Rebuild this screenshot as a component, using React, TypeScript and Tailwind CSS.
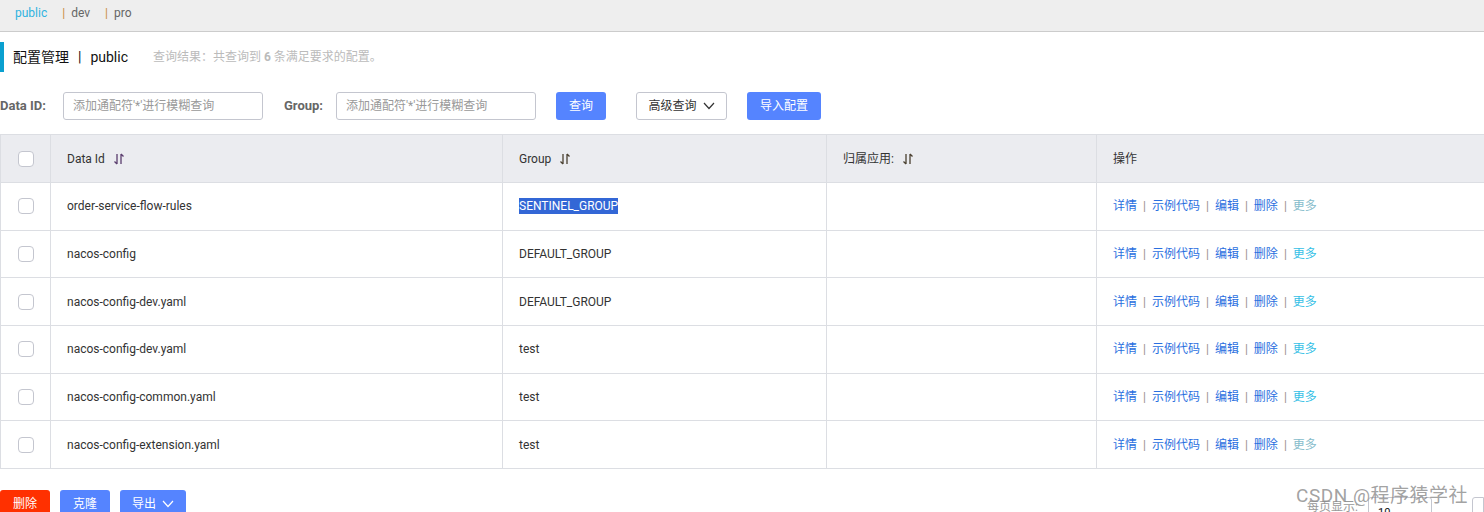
import React from 'react'

const FONT = { fontFamily: 'Roboto, "Noto Sans", "Noto Sans CJK SC", sans-serif' }

type Row = { dataId: string; group: string; selected?: boolean; moreMuted?: boolean }

const ROWS: Row[] = [
  { dataId: 'order-service-flow-rules', group: 'SENTINEL_GROUP', selected: true, moreMuted: true },
  { dataId: 'nacos-config', group: 'DEFAULT_GROUP' },
  { dataId: 'nacos-config-dev.yaml', group: 'DEFAULT_GROUP' },
  { dataId: 'nacos-config-dev.yaml', group: 'test' },
  { dataId: 'nacos-config-common.yaml', group: 'test' },
  { dataId: 'nacos-config-extension.yaml', group: 'test', moreMuted: true },
]

function SortIcon({ color = '#5a3d6e' }: { color?: string }) {
  return (
    <svg width="12" height="14" viewBox="0 0 12 14" className="ml-2 inline-block">
      <path d="M4 2 V12 M1.5 9.5 L4 12" stroke={color} strokeWidth="1.3" fill="none" />
      <path d="M8 12 V2 M8 2 L10.5 4.5" stroke={color} strokeWidth="1.3" fill="none" />
    </svg>
  )
}

function Chevron({ color = '#333' }: { color?: string }) {
  return (
    <svg width="12" height="8" viewBox="0 0 12 8" className="ml-1.5 inline-block">
      <polyline points="1,1 6,6.5 11,1" stroke={color} strokeWidth="1.2" fill="none" />
    </svg>
  )
}

function Checkbox() {
  return <div className="w-4 h-4 rounded-[4px] border border-[#c4c6cf] bg-white" />
}

function Sep() {
  return <span className="mx-[6px] text-[#9a8f8f]">|</span>
}

export default function App() {
  return (
    <div className="w-[1484px] h-[512px] overflow-hidden bg-white text-[12px] text-[#333]" style={FONT}>
      {/* namespace bar */}
      <div className="h-[32px] bg-[#eeeeee] border-b border-[#cccccc] flex items-center pl-[15px] pb-[5px]">
        <span className="text-[#2fb3e0]">public</span>
        <span className="ml-[15px] text-[#c98d3b]">|</span>
        <span className="ml-[6px] text-[#666]">dev</span>
        <span className="ml-[15px] text-[#c98d3b]">|</span>
        <span className="ml-[6px] text-[#666]">pro</span>
      </div>

      {/* title */}
      <div className="mt-[10px] h-[30px] border-l-[4px] border-[#0aa0d0] flex items-center pl-[9px]">
        <span className="text-[14px] text-[#111]">配置管理</span>
        <span className="text-[14px] text-[#111] mx-[9px]">|</span>
        <span className="text-[14px] text-[#111]">public</span>
        <span className="ml-[25px] text-[#bbbbbb]">
          查询结果：共查询到 <b className="font-bold">6</b> 条满足要求的配置。
        </span>
      </div>

      {/* search row */}
      <div className="mt-[20px] h-[28px] flex items-center">
        <span className="font-bold text-[#666] text-[13px] w-[63px]">Data ID:</span>
        <div className="w-[200px] h-[28px] border border-[#c4c6cf] rounded-[3px] flex items-center pl-[9px] text-[#999]">
          添加通配符'*'进行模糊查询
        </div>
        <span className="ml-[21px] font-bold text-[#666] text-[13px] w-[52px]">Group:</span>
        <div className="w-[200px] h-[28px] border border-[#c4c6cf] rounded-[3px] flex items-center pl-[9px] text-[#999]">
          添加通配符'*'进行模糊查询
        </div>
        <button className="ml-[20px] w-[50px] h-[28px] rounded-[3px] bg-[#5584ff] text-white">查询</button>
        <button className="ml-[30px] w-[91px] h-[28px] rounded-[3px] border border-[#c4c6cf] bg-white flex items-center justify-center">
          高级查询
          <Chevron />
        </button>
        <button className="ml-[20px] w-[74px] h-[28px] rounded-[3px] bg-[#5584ff] text-white">导入配置</button>
      </div>

      {/* table */}
      <div className="mt-[14px] border-t border-l border-[#dcdee3]">
        <div className="grid grid-cols-[50px_452px_324px_270px_1fr] h-[48px] bg-[#ebecf0] border-b border-[#dcdee3]">
          <div className="flex items-center justify-center border-r border-[#dcdee3]">
            <Checkbox />
          </div>
          <div className="flex items-center pl-[16px] border-r border-[#dcdee3]">
            Data Id
            <SortIcon />
          </div>
          <div className="flex items-center pl-[16px] border-r border-[#dcdee3]">
            Group
            <SortIcon color="#4a4030" />
          </div>
          <div className="flex items-center pl-[16px] border-r border-[#dcdee3]">
            归属应用:
            <SortIcon color="#4a4030" />
          </div>
          <div className="flex items-center pl-[16px]">操作</div>
        </div>
        {ROWS.map((r, i) => (
          <div
            key={i}
            className="grid grid-cols-[50px_452px_324px_270px_1fr] h-[47.67px] border-b border-[#dcdee3]"
          >
            <div className="flex items-center justify-center border-r border-[#dcdee3]">
              <Checkbox />
            </div>
            <div className="flex items-center pl-[16px] border-r border-[#dcdee3]">{r.dataId}</div>
            <div className="flex items-center pl-[16px] border-r border-[#dcdee3]">
              {r.selected ? (
                <span className="bg-[#3367d6] text-white leading-[16px]">{r.group}</span>
              ) : (
                r.group
              )}
            </div>
            <div className="border-r border-[#dcdee3]" />
            <div className="flex items-center pl-[16px] text-[#2a6fe0]">
              <span>详情</span>
              <Sep />
              <span>示例代码</span>
              <Sep />
              <span>编辑</span>
              <Sep />
              <span>删除</span>
              <Sep />
              <span className={r.moreMuted ? 'text-[#86bccb]' : 'text-[#36bfe6]'}>更多</span>
            </div>
          </div>
        ))}
      </div>

      {/* bottom bar */}
      <div className="mt-[21px] flex items-start relative">
        <button className="w-[50px] h-[28px] rounded-[3px] bg-[#ff3000] text-white">删除</button>
        <button className="ml-[10px] w-[50px] h-[28px] rounded-[3px] bg-[#5584ff] text-white">克隆</button>
        <button className="ml-[10px] w-[66px] h-[28px] rounded-[3px] bg-[#5584ff] text-white flex items-center justify-center">
          导出
          <Chevron color="#ffffff" />
        </button>
        <div className="ml-auto flex items-start pt-[7px]">
          <span className="text-[#999] mt-[1px]">每页显示:</span>
          <div className="ml-[10px] w-[64px] h-[28px] border border-[#c4c6cf] rounded-[3px] flex items-start pl-[9px] pt-[7px] text-[#111] text-[11px]">
            10
          </div>
          <div className="ml-[40px] w-[12px] h-[28px] border border-[#c4c6cf] rounded-l-[3px]" />
        </div>
        <div className="absolute right-[16px] top-[-8px] text-[19px] text-[#8a8a8a]/80 tracking-[0.5px]">
          CSDN @程序猿学社
        </div>
      </div>
    </div>
  )
}
